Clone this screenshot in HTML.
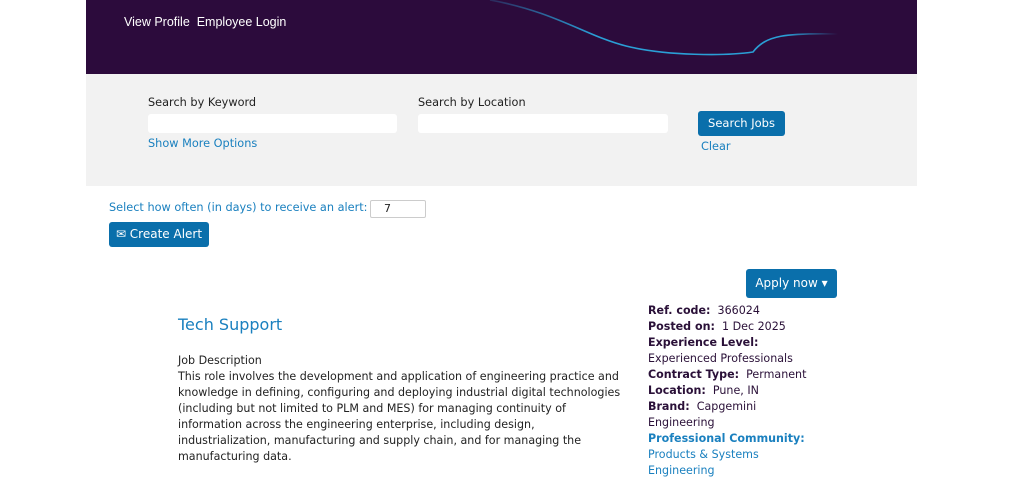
<!DOCTYPE html>
<html><head><meta charset="utf-8"><style>
*{margin:0;padding:0;box-sizing:border-box}
body{width:1024px;height:476px;background:#fff;position:relative;overflow:hidden;font-family:"DejaVu Sans","Liberation Sans",sans-serif;font-size:11px;color:#222}
.a{position:absolute;white-space:nowrap}
.hdr{left:86px;top:0;width:831px;height:74px;background:#2c0b3c}
.srch{left:86px;top:74px;width:831px;height:112px;background:#f2f2f2}
.in{background:#fff;border-radius:3px;height:19px}
.btn{background:#0a6fab;color:#fff;border-radius:3px;text-align:center}
.lnk{color:#1a80bf}
.b{font-weight:bold;color:#2a1038}
.p{color:#2a1038}
</style></head><body>
<div class="a hdr"></div>
<svg class="a" style="left:86px;top:0" width="831" height="74">
<defs><linearGradient id="g" x1="0" x2="1"><stop offset="0" stop-color="#2a9fd6" stop-opacity="0.2"/><stop offset="0.3" stop-color="#2a9fd6"/><stop offset="0.85" stop-color="#2a9fd6"/><stop offset="1" stop-color="#2a9fd6" stop-opacity="0"/></linearGradient></defs>
<path d="M404 0 C470 12 500 36 540 46 C580 56 640 56 667 52 C680 35 700 33 752 34" fill="none" stroke="url(#g)" stroke-width="1.6"/>
</svg>
<div class="a" style="left:124px;top:15px;color:#fff;font-family:'Liberation Sans',sans-serif;font-size:12.5px">View Profile&nbsp;&nbsp;Employee Login</div>
<div class="a srch"></div>
<div class="a" style="left:148px;top:96px;font-size:11.3px">Search by Keyword</div>
<div class="a in" style="left:148px;top:114px;width:249px"></div>
<div class="a" style="left:418px;top:96px;font-size:11.3px">Search by Location</div>
<div class="a in" style="left:418px;top:114px;width:250px"></div>
<div class="a lnk" style="left:148px;top:137px;font-size:11.3px">Show More Options</div>
<div class="a btn" style="left:698px;top:111px;width:87px;height:25px;line-height:25px;font-size:11.5px">Search Jobs</div>
<div class="a lnk" style="left:701px;top:140px;font-size:11.3px">Clear</div>
<div class="a lnk" style="left:109px;top:201px;font-size:11.3px">Select how often (in days) to receive an alert:</div>
<div class="a" style="left:370px;top:200px;width:56px;height:18px;border:1px solid #ccc;border-radius:2px;padding-left:13px;line-height:16px">7</div>
<div class="a btn" style="left:109px;top:222px;width:100px;height:25px;line-height:25px;font-size:12px">✉ Create Alert</div>
<div class="a btn" style="left:746px;top:269px;width:91px;height:29px;line-height:29px;font-size:12px">Apply now ▾</div>
<div class="a lnk" style="left:178px;top:315px;font-size:16px">Tech Support</div>
<div class="a" style="left:178px;top:353px;line-height:16px;font-size:11.1px">Job Description<br>This role involves the development and application of engineering practice and<br>knowledge in defining, configuring and deploying industrial digital technologies<br>(including but not limited to PLM and MES) for managing continuity of<br>information across the engineering enterprise, including design,<br>industrialization, manufacturing and supply chain, and for managing the<br>manufacturing data.</div>
<div class="a" style="left:648px;top:303px;line-height:16px;font-size:11.1px">
<span class="b">Ref. code:</span> <span class="p">&nbsp;366024</span><br>
<span class="b">Posted on:</span> <span class="p">&nbsp;1 Dec 2025</span><br>
<span class="b">Experience Level:</span><br>
<span class="p">Experienced Professionals</span><br>
<span class="b">Contract Type:</span> <span class="p">&nbsp;Permanent</span><br>
<span class="b">Location:</span> <span class="p">&nbsp;Pune, IN</span><br>
<span class="b">Brand:</span> <span class="p">&nbsp;Capgemini</span><br>
<span class="p">Engineering</span><br>
<span class="b" style="color:#1a80bf">Professional Community:</span><br>
<span class="lnk">Products &amp; Systems</span><br>
<span class="lnk">Engineering</span></div>
</body></html>
